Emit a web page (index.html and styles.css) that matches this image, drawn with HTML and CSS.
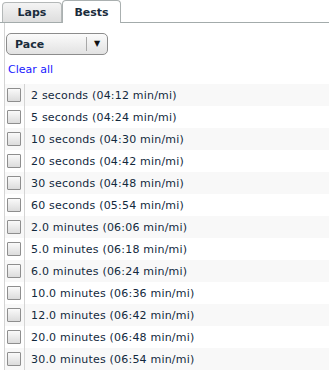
FILE: index.html
```html
<!DOCTYPE html>
<html lang="en">
<head>
  <meta charset="UTF-8">
  <title>Bests</title>
  <link rel="stylesheet" href="styles.css">
</head>
<body>
  <div class="tabs">
    <div class="tab">Laps</div>
    <div class="tab active">Bests</div>
  </div>
  <div class="panel">
    <div class="select">
      <span class="select-label">Pace</span>
      <span class="select-arrow">&#9660;</span>
    </div>
    <a class="clear" href="#">Clear all</a>
    <table class="bests">
      <tr><td class="chk"><span class="box"></span></td><td>2 seconds (04:12 min/mi)</td></tr>
      <tr><td class="chk"><span class="box"></span></td><td>5 seconds (04:24 min/mi)</td></tr>
      <tr><td class="chk"><span class="box"></span></td><td>10 seconds (04:30 min/mi)</td></tr>
      <tr><td class="chk"><span class="box"></span></td><td>20 seconds (04:42 min/mi)</td></tr>
      <tr><td class="chk"><span class="box"></span></td><td>30 seconds (04:48 min/mi)</td></tr>
      <tr><td class="chk"><span class="box"></span></td><td>60 seconds (05:54 min/mi)</td></tr>
      <tr><td class="chk"><span class="box"></span></td><td>2.0 minutes (06:06 min/mi)</td></tr>
      <tr><td class="chk"><span class="box"></span></td><td>5.0 minutes (06:18 min/mi)</td></tr>
      <tr><td class="chk"><span class="box"></span></td><td>6.0 minutes (06:24 min/mi)</td></tr>
      <tr><td class="chk"><span class="box"></span></td><td>10.0 minutes (06:36 min/mi)</td></tr>
      <tr><td class="chk"><span class="box"></span></td><td>12.0 minutes (06:42 min/mi)</td></tr>
      <tr><td class="chk"><span class="box"></span></td><td>20.0 minutes (06:48 min/mi)</td></tr>
      <tr><td class="chk"><span class="box"></span></td><td>30.0 minutes (06:54 min/mi)</td></tr>
    </table>
  </div>
</body>
</html>
```

FILE: styles.css
```css
body {
  margin: 0;
  font-family: "DejaVu Sans", Verdana, sans-serif;
  font-size: 11px;
  color: #12293d;
  background: #fff;
}
.tabs {
  display: flex;
  align-items: flex-end;
  height: 22px;
  padding-left: 2px;
  border-bottom: 1px solid #a3abab;
}
.tab {
  width: 58px;
  height: 19px;
  line-height: 19px;
  text-align: center;
  font-weight: bold;
  color: #1a2c3c;
  border: 1px solid #b4b8b8;
  border-bottom: none;
  border-radius: 4px 4px 0 0;
  background: linear-gradient(#f4f4f4, #dedede);
}
.tab.active {
  width: 57px;
  height: 22px;
  line-height: 23px;
  margin-bottom: -1px;
  background: #fff;
  border-color: #aab0b0;
}
.panel {
  margin-left: 4px;
  border-left: 1px solid #d4d4d4;
  padding-top: 10px;
}
.select {
  display: flex;
  align-items: center;
  width: 100px;
  height: 20px;
  margin-left: 1px;
  border: 1px solid #8c8c8c;
  border-radius: 5px;
  background: linear-gradient(#fbfbfb, #e2e2e2);
  font-weight: bold;
  color: #1a2c3c;
}
.select-label {
  flex: 1;
  padding-left: 8px;
}
.select-arrow {
  width: 20px;
  height: 14px;
  line-height: 14px;
  border-left: 1px solid #a8a8a8;
  text-align: center;
  font-size: 8px;
  color: #111;
}
.clear {
  display: block;
  margin: 8px 0 0 3px;
  height: 21px;
  color: #2020ff;
  text-decoration: none;
}
.bests {
  width: 100%;
  border-collapse: collapse;
}
.bests td {
  height: 22px;
  padding: 0 0 0 6px;
  white-space: nowrap;
  letter-spacing: 0.2px;
}
.bests tr:nth-child(odd) {
  background: #f8f8f8;
}
.bests td.chk {
  width: 19px;
  padding: 0;
  border-right: 1px solid #d4d4d4;
}
.box {
  display: block;
  width: 12px;
  height: 12px;
  margin-left: 2px;
  border: 1px solid #8e8e8e;
  border-radius: 1px;
  background: linear-gradient(#fafafa, #dcdcdc);
}
```
